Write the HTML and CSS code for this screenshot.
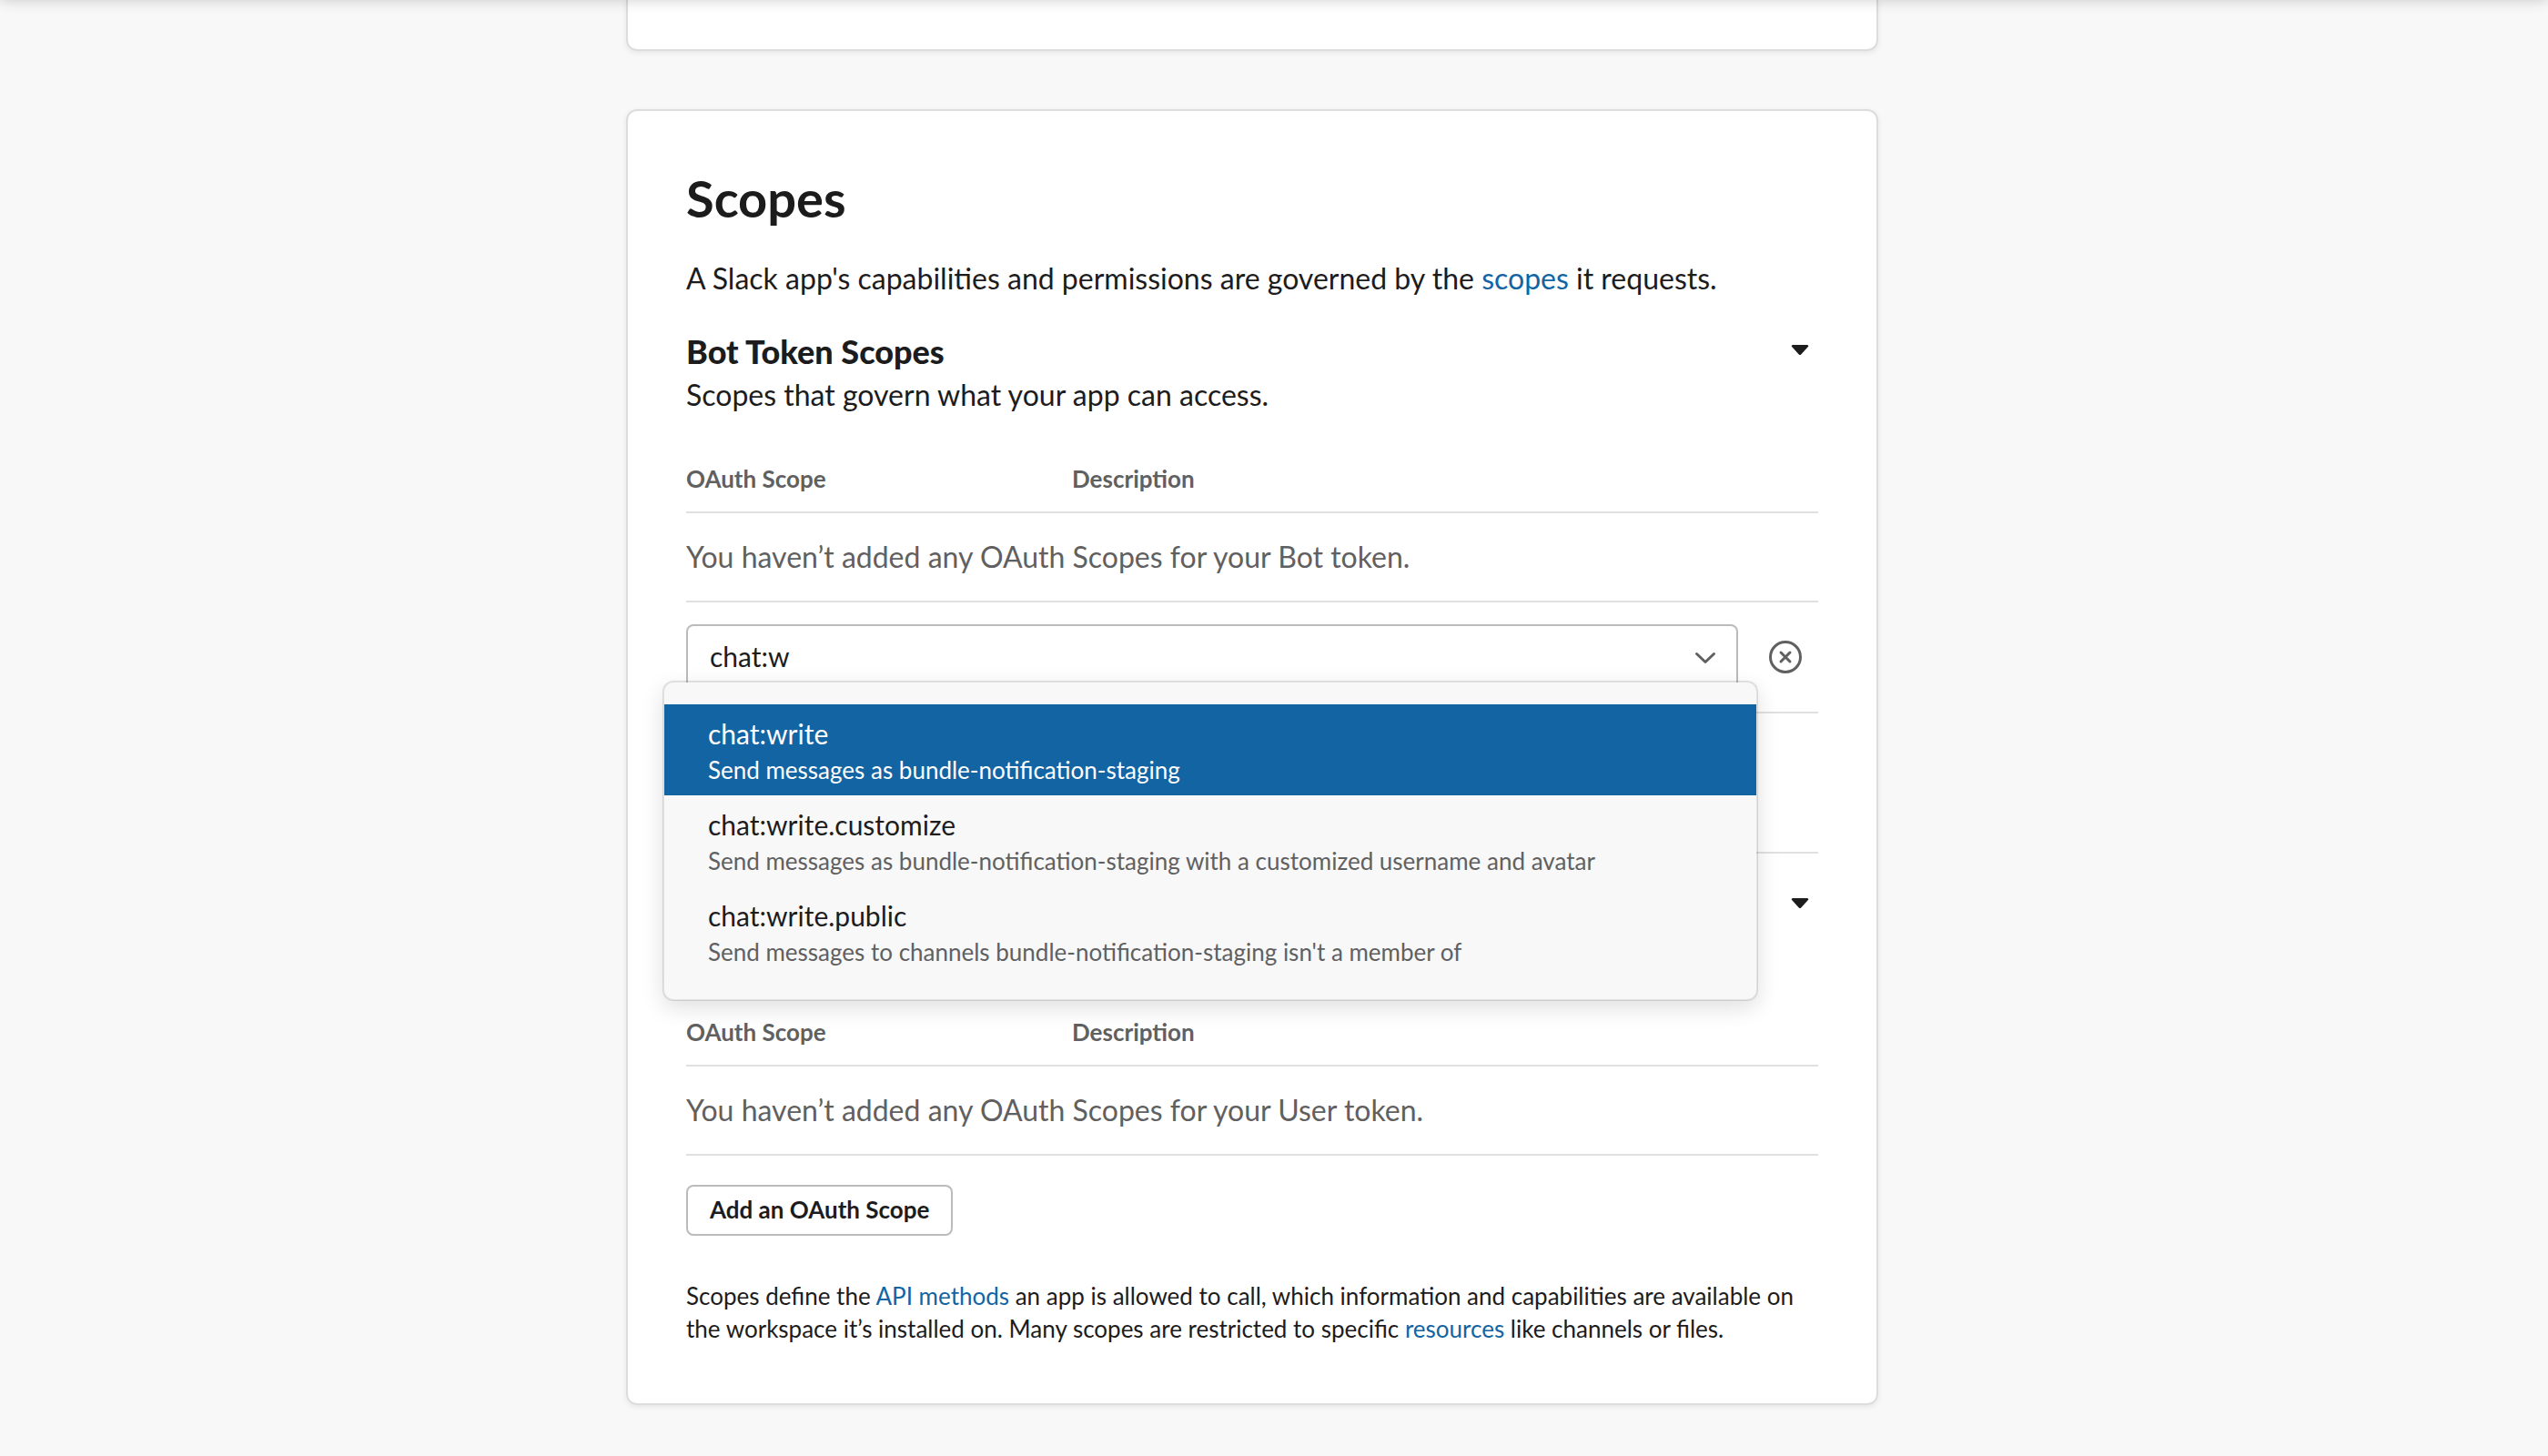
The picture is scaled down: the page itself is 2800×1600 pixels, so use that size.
FILE: index.html
```html
<!DOCTYPE html>
<html lang="en">
<head>
<meta charset="UTF-8">
<meta name="viewport" content="width=device-width, initial-scale=1.0">
<title>OAuth &amp; Permissions</title>
<link rel="stylesheet" href="styles.css">
</head>
<body>

<header class="topbar"></header>

<main class="page">
    <section class="card card-previous"></section>

    <section class="card">
        <h1>Scopes</h1>
        <p class="intro">A Slack app's capabilities and permissions are governed by the <a href="#scopes">scopes</a> it requests.</p>

        <div class="scope-group">
            <div class="group-header">
                <h2>Bot Token Scopes</h2>
                <button class="toggle" type="button" aria-label="Collapse Bot Token Scopes" aria-expanded="true">
                    <svg width="20" height="12" viewBox="0 0 20 12"><path d="M2.2 0h15.6c1.3 0 1.9 1.2 1.1 2.1l-7.7 8.4c-.7.7-1.7.7-2.4 0L1.1 2.1C.3 1.2.9 0 2.2 0z"/></svg>
                </button>
            </div>
            <p>Scopes that govern what your app can access.</p>

            <table class="scope-table">
                <thead>
                    <tr><th scope="col">OAuth Scope</th><th scope="col">Description</th></tr>
                </thead>
                <tbody>
                    <tr><td colspan="2">You haven’t added any OAuth Scopes for your Bot token.</td></tr>
                </tbody>
            </table>

            <div class="picker-row">
                <div class="picker">
                    <input class="picker-input" type="text" value="chat:w" role="combobox" aria-label="Add permission by scope or API method" aria-expanded="true" aria-controls="scopeOptions">
                    <svg class="chevron" width="28" height="20" viewBox="0 0 28 20"><path d="M4.5 5.5 14 14.5 23.5 5.5"/></svg>
                    <ul class="options" id="scopeOptions" role="listbox" aria-label="Scopes">
                        <li class="option selected" role="option" aria-selected="true">
                            <span class="option-name">chat:write</span>
                            <span class="option-text">Send messages as bundle-notification-staging</span>
                        </li>
                        <li class="option" role="option" aria-selected="false">
                            <span class="option-name">chat:write.customize</span>
                            <span class="option-text">Send messages as bundle-notification-staging with a customized username and avatar</span>
                        </li>
                        <li class="option" role="option" aria-selected="false">
                            <span class="option-name">chat:write.public</span>
                            <span class="option-text">Send messages to channels bundle-notification-staging isn't a member of</span>
                        </li>
                    </ul>
                </div>
                <button class="remove" type="button" aria-label="Remove scope">
                    <svg width="36" height="36" viewBox="0 0 36 36"><circle cx="18" cy="18" r="16.5"/><path d="M13 13l10 10M23 13l-10 10"/></svg>
                </button>
            </div>

            <button class="button" type="button">Add an OAuth Scope</button>
        </div>

        <div class="scope-group scope-group-user">
            <div class="group-header">
                <h2>User Token Scopes</h2>
                <button class="toggle" type="button" aria-label="Collapse User Token Scopes" aria-expanded="true">
                    <svg width="20" height="12" viewBox="0 0 20 12"><path d="M2.2 0h15.6c1.3 0 1.9 1.2 1.1 2.1l-7.7 8.4c-.7.7-1.7.7-2.4 0L1.1 2.1C.3 1.2.9 0 2.2 0z"/></svg>
                </button>
            </div>
            <p>Scopes that access user data.</p>

            <table class="scope-table">
                <thead>
                    <tr><th scope="col">OAuth Scope</th><th scope="col">Description</th></tr>
                </thead>
                <tbody>
                    <tr><td colspan="2">You haven’t added any OAuth Scopes for your User token.</td></tr>
                </tbody>
            </table>

            <button class="button" type="button">Add an OAuth Scope</button>
        </div>

        <p class="footnote">Scopes define the <a href="#methods">API methods</a> an app is allowed to call, which information and capabilities are available on the workspace it’s installed on. Many scopes are restricted to specific <a href="#resources">resources</a> like channels or files.</p>
    </section>
</main>

</body>
</html>
```
FILE: styles.css
```css
* {
    box-sizing: border-box;
}

body {
    margin: 0;
    padding-right: 48px;
    background-color: #f8f8f8;
    color: #1d1c1d;
    font-family: Lato, sans-serif;
    font-size: 32px;
    line-height: 48px;
}

h1, h2, p {
    margin: 0;
}

a {
    color: #1264a3;
    text-decoration: none;
}

a:hover {
    text-decoration: underline;
}

button {
    font-family: inherit;
    color: inherit;
    cursor: pointer;
}

/* sits just above the scrolled content, only its shadow shows */
.topbar {
    position: fixed;
    top: -40px;
    left: 0;
    right: 0;
    height: 40px;
    z-index: 10;
    box-shadow: 0 0 16px rgba(0, 0, 0, 0.2);
}

.page {
    max-width: 1376px;
    margin: 0 auto;
    padding-bottom: 56px;
}

.card {
    margin-bottom: 64px;
    padding: 64px;
    background-color: #fff;
    border: 2px solid #ddd;
    border-radius: 12px;
    box-shadow: 0 2px 6px rgba(0, 0, 0, 0.08);
}

.card:last-child {
    margin-bottom: 0;
}

.card-previous {
    height: 56px;
    padding: 0;
    border-top: none;
    border-radius: 0 0 12px 12px;
}

h1 {
    font-size: 56px;
    line-height: 64px;
    font-weight: 700;
}

.intro {
    margin: 32px 0;
}

.scope-group-user {
    margin-top: 64px;
    padding-top: 32px;
    border-top: 2px solid #e0e0e0;
}

.group-header {
    display: flex;
    justify-content: space-between;
}

h2 {
    font-size: 36px;
    line-height: 48px;
    font-weight: 900;
}

.toggle {
    display: flex;
    align-items: center;
    justify-content: center;
    width: 40px;
    height: 46px;
    padding: 0;
    background: none;
    border: none;
}

.toggle svg {
    fill: #1d1c1d;
}

.scope-table {
    width: 100%;
    margin-top: 32px;
    border-collapse: separate;
    border-spacing: 0;
    table-layout: fixed;
}

.scope-table th {
    padding: 18px 0;
    border-bottom: 2px solid #e0e0e0;
    color: #616061;
    font-size: 26px;
    line-height: 36px;
    font-weight: 700;
    text-align: left;
}

.scope-table th:first-child {
    width: 424px;
}

.scope-table td {
    padding: 24px 0;
    border-bottom: 2px solid #e0e0e0;
    color: #616061;
}

.picker-row {
    display: flex;
    gap: 16px;
    padding: 24px 0;
    border-bottom: 2px solid #e0e0e0;
}

.picker {
    position: relative;
    flex: 1;
}

.picker-input {
    display: block;
    width: 100%;
    height: 72px;
    padding: 0 64px 2px 24px;
    background-color: #fff;
    border: 2px solid #bbb;
    border-radius: 8px;
    outline: none;
    color: #1d1c1d;
    font-family: inherit;
    font-size: 30px;
}

.chevron {
    position: absolute;
    top: 27px;
    right: 22px;
    fill: none;
    stroke: #616061;
    stroke-width: 3;
    stroke-linecap: round;
    stroke-linejoin: round;
}

.options {
    position: absolute;
    top: 62px;
    left: -26px;
    right: -22px;
    z-index: 5;
    margin: 0;
    padding: 24px 0;
    list-style: none;
    background-color: #f8f8f8;
    background-clip: padding-box;
    border: 2px solid rgba(29, 28, 29, 0.13);
    border-radius: 12px;
    box-shadow: 0 8px 24px rgba(0, 0, 0, 0.12);
}

.option {
    display: flex;
    flex-direction: column;
    gap: 2px;
    padding: 12px 48px 10px;
    cursor: pointer;
}

.option-name {
    font-size: 30px;
    line-height: 40px;
}

.option-text {
    color: #616061;
    font-size: 26px;
    line-height: 36px;
}

.option.selected,
.option.selected .option-text {
    background-color: #1264a3;
    color: #fff;
}

.remove {
    display: flex;
    align-items: center;
    justify-content: center;
    width: 72px;
    height: 72px;
    padding: 0;
    background: none;
    border: none;
}

.remove svg {
    fill: none;
    stroke: #616061;
    stroke-width: 3;
    stroke-linecap: round;
}

.button {
    display: block;
    height: 56px;
    margin-top: 32px;
    padding: 0 24px 2px;
    background-color: #fff;
    border: 2px solid #bbb;
    border-radius: 8px;
    font-size: 26px;
    font-weight: 700;
}

.button:hover {
    background-color: #f8f8f8;
}

.footnote {
    margin-top: 48px;
    font-size: 26px;
    line-height: 36px;
}
```
